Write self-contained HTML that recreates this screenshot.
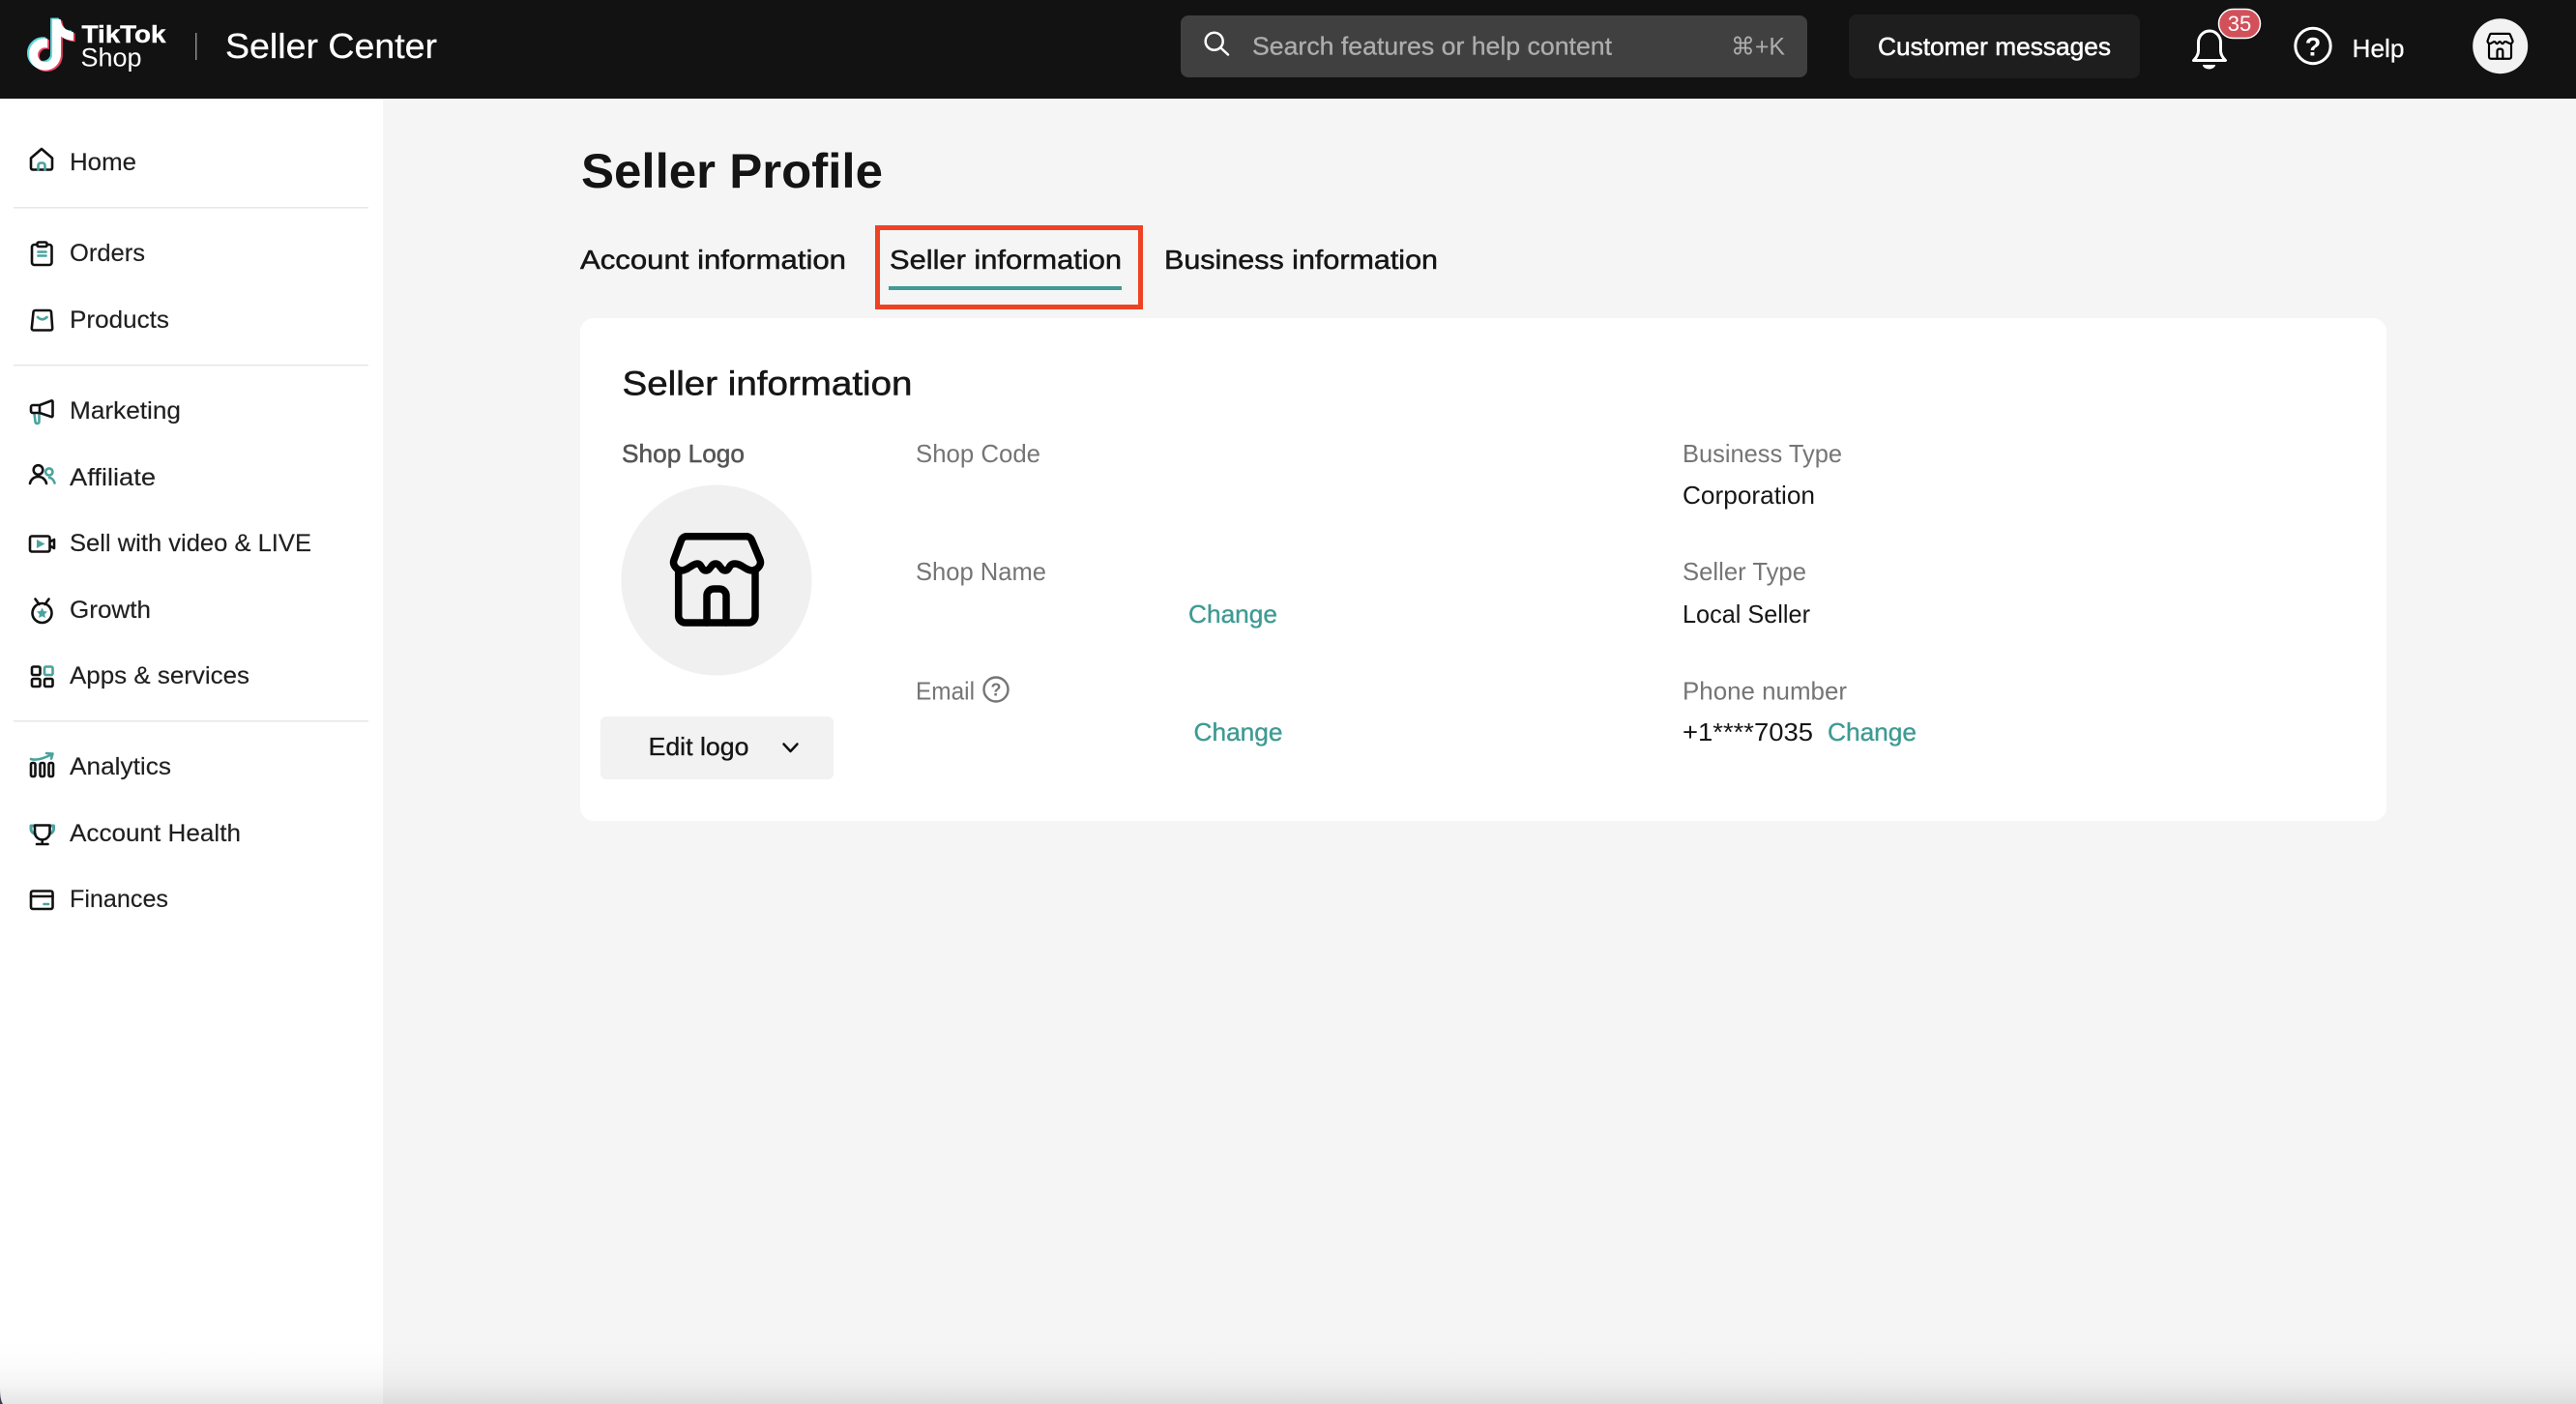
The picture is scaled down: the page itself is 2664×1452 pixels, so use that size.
<!DOCTYPE html>
<html lang="en"><head><meta charset="utf-8"><title>Seller Profile</title>
<style>
html,body{margin:0;padding:0;background:#f5f5f5;width:2664px;height:1452px;overflow:hidden}
svg{display:block}
text{font-family:"Liberation Sans","DejaVu Sans",sans-serif;white-space:pre}
.nav{font-size:25px;fill:#1f1f1f;stroke:#1f1f1f;stroke-width:.15}
.lab{font-size:26px;fill:#757575}
.val{font-size:26px;fill:#161616}
.lnk{font-size:26px;fill:#3f9a94;stroke:#3f9a94;stroke-width:.35}
.tab{font-size:28px;fill:#161616;stroke:#161616;stroke-width:.5}
.ik{fill:none;stroke:#111;stroke-width:2.6;stroke-linejoin:round;stroke-linecap:round}
.tl{fill:none;stroke:#4aa39e;stroke-width:2.6;stroke-linejoin:round;stroke-linecap:round}
</style></head><body>
<svg xmlns="http://www.w3.org/2000/svg" width="2664" height="1452" viewBox="0 0 2664 1452">
<defs>
<linearGradient id="sh" x1="0" y1="0" x2="0" y2="1">
<stop offset="0" stop-color="#000" stop-opacity="0"/><stop offset=".4" stop-color="#000" stop-opacity=".012"/><stop offset=".7" stop-color="#000" stop-opacity=".04"/><stop offset="1" stop-color="#000" stop-opacity=".1"/>
</linearGradient>
<path id="note" d="M12.525.02c1.31-.02 2.61-.01 3.91-.02.08 1.53.63 3.09 1.75 4.17 1.12 1.11 2.7 1.62 4.24 1.79v4.03c-1.44-.05-2.89-.35-4.2-.97-.57-.26-1.1-.59-1.62-.93-.01 2.92.01 5.84-.02 8.75-.08 1.4-.54 2.79-1.35 3.94-1.31 1.92-3.58 3.17-5.91 3.21-1.43.08-2.86-.31-4.08-1.03-2.02-1.19-3.44-3.37-3.65-5.71-.02-.5-.03-1-.01-1.49.18-1.9 1.12-3.72 2.58-4.96 1.66-1.44 3.98-2.13 6.15-1.72.02 1.48-.04 2.96-.04 4.44-.99-.32-2.15-.23-3.02.37-.63.41-1.11 1.04-1.36 1.75-.21.51-.15 1.07-.14 1.61.24 1.64 1.82 3.02 3.5 2.87 1.12-.01 2.19-.66 2.77-1.61.19-.33.4-.67.41-1.06.1-1.79.06-3.57.07-5.36.01-4.03-.01-8.05.02-12.07z"/>
<g id="store" fill="none" stroke="#000" stroke-width="7.500" stroke-linejoin="round" stroke-linecap="round">
<path d="M17 3.700H79a6 6 0 0 1 5.500 4L93 28c2 5-3 11-8 11C78 39 74 32 67 32S62 39 57 39S52 32 47 32S42 39 37 39S33 32 28 32S18 39 12 39C7 39 2 33 4 28L11.500 7.700A6 6 0 0 1 17 3.700z"/>
<path d="M8.700 38V86a7 7 0 0 0 7 7H81a7 7 0 0 0 7-7V38"/>
<path d="M38 93V65a7 7 0 0 1 7-7h6a7 7 0 0 1 7 7V93"/>
</g>
</defs>

<rect width="2664" height="1452" fill="#f5f5f5"/>
<rect y="102" width="396" height="1350" fill="#fff"/>
<rect width="2664" height="102" fill="#121212"/>

<!-- Header logo -->
<g transform="translate(25,19) scale(2.2,2.2)">
<use href="#note" x="-.2" y="-.2" fill="#5fd9dc"/>
<use href="#note" x="1.500" y="1" fill="#e8405f"/>
<use href="#note" x=".7" y=".4" fill="#fff"/>
</g>
<text x="84.500" y="44" font-size="25" font-weight="700" fill="#fff" stroke="#fff" stroke-width=".4" textLength="87" lengthAdjust="spacingAndGlyphs">TikTok</text>
<text x="83.500" y="68.500" font-size="27" fill="#fff" textLength="63" lengthAdjust="spacingAndGlyphs">Shop</text>
<rect x="202" y="34" width="1.500" height="28" fill="#8a8a8a"/>
<text x="233" y="60" font-size="36" fill="#fff" stroke="#fff" stroke-width=".3" textLength="219" lengthAdjust="spacingAndGlyphs">Seller Center</text>

<!-- Search -->
<rect x="1221" y="16" width="648" height="64" rx="8" fill="#404040"/>
<circle cx="1255.700" cy="42.700" r="9" fill="none" stroke="#fff" stroke-width="2.500"/>
<path d="M1262.500 49.500l7.500 7" stroke="#fff" stroke-width="2.500" stroke-linecap="round"/>
<text x="1295" y="56.500" font-size="26" fill="#adadad" stroke="#adadad" stroke-width=".3" textLength="372" lengthAdjust="spacingAndGlyphs">Search features or help content</text>
<text x="1790" y="56.500" font-size="25" fill="#adadad" textLength="56" lengthAdjust="spacingAndGlyphs">⌘+K</text>

<!-- Customer messages -->
<rect x="1912" y="15" width="301" height="66" rx="8" fill="#1e1e1e"/>
<text x="1942" y="57" font-size="26" fill="#fff" stroke="#fff" stroke-width=".5" textLength="241" lengthAdjust="spacingAndGlyphs">Customer messages</text>

<!-- Bell -->
<path d="M2268.500 62.500c3-3 5-6 5-10V44a11.500 12 0 0 1 23 0v8.500c0 4 2 7 5 10z" fill="none" stroke="#fff" stroke-width="3" stroke-linejoin="round"/>
<path d="M2278 67h13a6.500 4.500 0 0 1-13 0z" fill="#fff"/>
<rect x="2294.500" y="9.500" width="43" height="30" rx="15" fill="#d1505a" stroke="#fff" stroke-width="1.500"/>
<text x="2316" y="32" font-size="22" fill="#fff" text-anchor="middle">35</text>

<!-- Help -->
<circle cx="2392" cy="47.500" r="18.200" fill="none" stroke="#fff" stroke-width="3"/>
<text x="2392" y="57.500" font-size="27" font-weight="700" fill="#fff" text-anchor="middle">?</text>
<text x="2432.500" y="59" font-size="26" fill="#fff" stroke="#fff" stroke-width=".3" textLength="54" lengthAdjust="spacingAndGlyphs">Help</text>

<!-- Avatar -->
<circle cx="2585.700" cy="47.700" r="28.500" fill="#f2f2f2"/>
<use href="#store" transform="translate(2571.500,33.800) scale(.29)"/>

<!-- Sidebar nav -->
<text class="nav" x="72" y="176" textLength="69" lengthAdjust="spacingAndGlyphs">Home</text>
<text class="nav" x="72" y="270" textLength="78" lengthAdjust="spacingAndGlyphs">Orders</text>
<text class="nav" x="72" y="339" textLength="103" lengthAdjust="spacingAndGlyphs">Products</text>
<text class="nav" x="72" y="433" textLength="115" lengthAdjust="spacingAndGlyphs">Marketing</text>
<text class="nav" x="72" y="502" textLength="89" lengthAdjust="spacingAndGlyphs">Affiliate</text>
<text class="nav" x="72" y="570" textLength="250" lengthAdjust="spacingAndGlyphs">Sell with video &amp; LIVE</text>
<text class="nav" x="72" y="639" textLength="84" lengthAdjust="spacingAndGlyphs">Growth</text>
<text class="nav" x="72" y="707" textLength="186" lengthAdjust="spacingAndGlyphs">Apps &amp; services</text>
<text class="nav" x="72" y="801" textLength="105" lengthAdjust="spacingAndGlyphs">Analytics</text>
<text class="nav" x="72" y="870" textLength="177" lengthAdjust="spacingAndGlyphs">Account Health</text>
<text class="nav" x="72" y="938" textLength="102" lengthAdjust="spacingAndGlyphs">Finances</text>
<rect x="14" y="214" width="367" height="1.500" fill="#e6e6e6"/>
<rect x="14" y="377" width="367" height="1.500" fill="#e6e6e6"/>
<rect x="14" y="745" width="367" height="1.500" fill="#e6e6e6"/>

<!-- Sidebar icons -->
<path class="ik" d="M32 173.500V163.500l11-9.500 11 9.500v10a2 2 0 0 1-2 2H34a2 2 0 0 1-2-2z"/>
<path class="tl" d="M39.500 175.500V171a2.500 2.500 0 0 1 2.500-2.500h2a2.500 2.500 0 0 1 2.500 2.500v4.500"/>

<rect class="ik" x="33" y="253" width="20.500" height="21" rx="2.500"/>
<rect class="ik" x="38.500" y="250.500" width="10" height="4.500" rx="1.500" style="fill:#fff"/>
<path class="tl" d="M39.500 260.500h8M39.500 264.500h8"/>

<path class="ik" d="M36.500 321h14.500a2 2 0 0 1 2 1.800l1.200 16.700a1.800 1.800 0 0 1-1.800 2H34.600a1.800 1.800 0 0 1-1.800-2l1.700-16.700a2 2 0 0 1 2-1.800z"/>
<path class="tl" d="M39 328q4.500 4.500 9.500 0"/>

<path class="tl" d="M35.500 428l1 8a2 2 0 0 0 4 0v-8"/>
<path class="ik" d="M32 421a2 2 0 0 1 2-2h7l12-4.500a1 1 0 0 1 1.500 1V430a1 1 0 0 1-1.500 1l-12-4H34a2 2 0 0 1-2-2zM41 419v8"/>

<circle class="ik" cx="39.500" cy="486" r="4.800"/>
<path class="ik" d="M31 500c1-4.500 4.500-7 8.500-7s7.500 2.500 8.500 7"/>
<circle class="tl" cx="50.800" cy="488" r="3.600"/>
<path class="tl" d="M51 494c2.500.2 4.500 2.500 5.500 5.500"/>

<path class="ik" d="M33 554.500h16.500a2 2 0 0 1 2 2v12a2 2 0 0 1-2 2H33a2 2 0 0 1-2-2v-12a2 2 0 0 1 2-2zM51.500 560.500l4.500-2.500v9l-4.500-2.500"/>
<path d="M38 558l8.500 4.500-8.500 4.500z" fill="#4aa39e"/>

<circle class="ik" cx="43.500" cy="634" r="10"/>
<path class="ik" d="M36.500 619.500l4 5.500M50.500 619.500l-4 5.500"/>
<path d="M43.500 628.500l1.700 3.500 3.800.5-2.800 2.700.7 3.800-3.400-1.800-3.400 1.800.7-3.800-2.800-2.700 3.800-.5z" fill="#4aa39e"/>

<rect class="ik" x="33" y="689.500" width="8.500" height="8.500" rx="1.500"/>
<rect class="tl" x="46" y="689.500" width="8.500" height="8.500" rx="1.500"/>
<rect class="ik" x="33" y="702" width="8.500" height="8" rx="1.500"/>
<rect class="ik" x="46" y="702" width="8.500" height="8" rx="1.500"/>

<rect class="ik" x="32" y="789" width="4.500" height="14" rx="1.500"/>
<rect class="ik" x="41.500" y="789" width="4.500" height="14" rx="1.500"/>
<rect class="ik" x="50.500" y="789" width="4.500" height="14" rx="1.500"/>
<path class="tl" d="M32 785q7 2.500 22-5M48 779l6.500.5-1.500 5"/>

<path class="tl" d="M35 854h-3v3c0 3 2 5 4.500 5.500M52 854h3.500v3c0 3-2 5-4.500 5.500" style="stroke-width:3"/>
<path class="ik" d="M36 853.500h15.500v8a7.800 7.800 0 0 1-15.500 0zM43.700 869.500v3M38 873h11.500"/>

<rect class="ik" x="32" y="921.500" width="22.500" height="18.500" rx="2"/>
<path class="ik" d="M32 927h22.500"/>
<path class="tl" d="M45.500 935h4.500"/>

<!-- Title + tabs -->
<text x="601" y="194" font-size="50" font-weight="700" fill="#141414" textLength="312" lengthAdjust="spacingAndGlyphs">Seller Profile</text>
<text class="tab" x="600" y="278" textLength="275" lengthAdjust="spacingAndGlyphs">Account information</text>
<text class="tab" x="920" y="278" textLength="240" lengthAdjust="spacingAndGlyphs">Seller information</text>
<text class="tab" x="1204" y="278" textLength="283" lengthAdjust="spacingAndGlyphs">Business information</text>
<rect x="919" y="296" width="241" height="4" fill="#409a96"/>
<rect x="907.500" y="235.500" width="272" height="82" fill="none" stroke="#ee4224" stroke-width="5"/>

<!-- Card -->
<rect x="600" y="329" width="1868" height="520" rx="14" fill="#fff"/>
<text x="643.500" y="408.500" font-size="35" fill="#161616" stroke="#161616" stroke-width=".55" textLength="300" lengthAdjust="spacingAndGlyphs">Seller information</text>

<!-- Logo column -->
<text x="643" y="478" font-size="26" fill="#555" stroke="#555" stroke-width=".5" textLength="127" lengthAdjust="spacingAndGlyphs">Shop Logo</text>
<circle cx="741" cy="600" r="98.500" fill="#f0f0f0"/>
<use href="#store" transform="translate(693,551)"/>
<rect x="621" y="741" width="241" height="65" rx="6" fill="#f2f2f2"/>
<text x="670.500" y="781" font-size="26" fill="#161616" stroke="#161616" stroke-width=".35" textLength="104" lengthAdjust="spacingAndGlyphs">Edit logo</text>
<path d="M810.500 769.500l7 7.500 7-7.500" fill="none" stroke="#111" stroke-width="2.500" stroke-linecap="round" stroke-linejoin="round"/>

<!-- Middle column -->
<text class="lab" x="947" y="478" textLength="129" lengthAdjust="spacingAndGlyphs">Shop Code</text>
<text class="lab" x="947" y="600" textLength="135" lengthAdjust="spacingAndGlyphs">Shop Name</text>
<text class="lab" x="947" y="723.500" textLength="61" lengthAdjust="spacingAndGlyphs">Email</text>
<circle cx="1030" cy="713" r="12.500" fill="none" stroke="#757575" stroke-width="2.400"/>
<text x="1030" y="719.500" font-size="18" font-weight="700" fill="#757575" text-anchor="middle">?</text>
<text class="lnk" x="1229" y="644" textLength="92" lengthAdjust="spacingAndGlyphs">Change</text>
<text class="lnk" x="1234.500" y="766" textLength="92" lengthAdjust="spacingAndGlyphs">Change</text>

<!-- Right column -->
<text class="lab" x="1740" y="478" textLength="165" lengthAdjust="spacingAndGlyphs">Business Type</text>
<text class="val" x="1740" y="521" textLength="137" lengthAdjust="spacingAndGlyphs">Corporation</text>
<text class="lab" x="1740" y="600" textLength="128" lengthAdjust="spacingAndGlyphs">Seller Type</text>
<text class="val" x="1740" y="644" textLength="132" lengthAdjust="spacingAndGlyphs">Local Seller</text>
<text class="lab" x="1740" y="723.500" textLength="170" lengthAdjust="spacingAndGlyphs">Phone number</text>
<text class="val" x="1740" y="766" textLength="135" lengthAdjust="spacingAndGlyphs">+1****7035</text>
<text class="lnk" x="1890" y="766" textLength="92" lengthAdjust="spacingAndGlyphs">Change</text>

<!-- Bottom shade -->
<rect x="0" y="1385" width="2664" height="67" fill="url(#sh)"/>
<path d="M0 1436q0 12 3 16H0z" fill="#3a3a4a"/>
</svg>
</body></html>
